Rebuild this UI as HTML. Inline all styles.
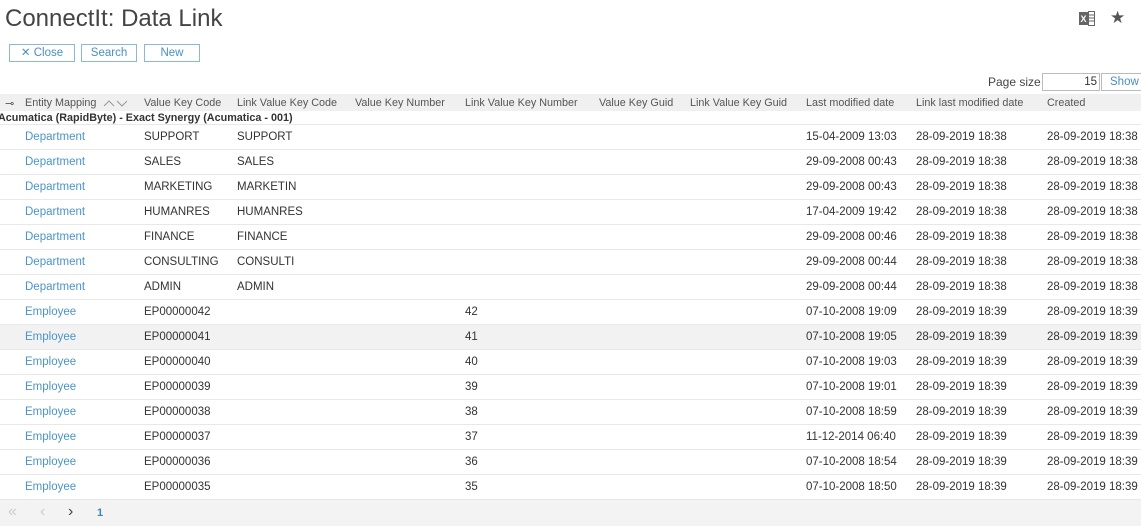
<!DOCTYPE html><html><head><style>
body{margin:0;width:1141px;height:532px;overflow:hidden;background:#fff;font-family:"Liberation Sans",sans-serif;font-size:11.5px;color:#333;position:relative}
.a{position:absolute;white-space:nowrap}
.btn{position:absolute;top:44px;height:16px;border:1px solid #8db8d2;color:#4a90bd;font-size:11.5px;line-height:16px;text-align:center}
.row{position:absolute;left:0;width:1141px;height:24px;border-bottom:1px solid #e8e8e8}
.row span{position:absolute;top:6px;white-space:nowrap}
.l{color:#4a94c8}
.h span{position:absolute;top:3px;color:#555;font-size:10.8px;white-space:nowrap}
</style></head><body>
<div class="a" style="left:5px;top:5px;font-size:24px;color:#444">ConnectIt: Data Link</div>
<svg class="a" style="left:1079px;top:11px" width="17" height="15" viewBox="0 0 17 15"><rect x="0" y="1" width="9" height="13" fill="#666"/><text x="1.5" y="11" font-size="9" fill="#fff" font-family="Liberation Sans" font-weight="bold">X</text><rect x="9.5" y="0.5" width="6" height="14" fill="none" stroke="#666"/><path d="M10 4h5M10 7h5M10 10h5" stroke="#666"/></svg>
<div class="a" style="left:1110px;top:8px;font-size:17px;color:#555">★</div>
<div class="btn" style="left:9px;width:64px">✕ Close</div>
<div class="btn" style="left:81px;width:54px">Search</div>
<div class="btn" style="left:144px;width:54px">New</div>
<div class="a" style="left:988px;top:75px;color:#444;font-size:12px">Page size</div>
<div class="a" style="left:1042px;top:73px;width:54px;height:16px;border:1px solid #bbb;text-align:right;line-height:16px;color:#333;padding-right:2px">15</div>
<div class="a" style="left:1101px;top:73px;width:45px;height:16px;border:1px solid #bbb;color:#4a90bd;line-height:16px;padding-left:8px">Show</div>
<div class="row h" style="top:94px;height:17px;background:#f0f0f0;border:0">
<span style="left:5px">⊸</span><span style="left:25px">Entity Mapping</span><svg style="position:absolute;left:103px;top:5px" width="24" height="8"><path d="M1 7l5-5 5 5M14 2l5 5 5-5" fill="none" stroke="#999"/></svg><span style="left:144px">Value Key Code</span><span style="left:237px">Link Value Key Code</span><span style="left:355px">Value Key Number</span><span style="left:465px">Link Value Key Number</span><span style="left:599px">Value Key Guid</span><span style="left:690px">Link Value Key Guid</span><span style="left:806px">Last modified date</span><span style="left:916px">Link last modified date</span><span style="left:1047px">Created</span></div>
<div class="a" style="left:-2px;top:112px;font-weight:bold;font-size:10.8px;color:#333">Acumatica (RapidByte) - Exact Synergy (Acumatica - 001)</div>
<div id="rows"></div>
<div class="a" style="left:0;top:500px;width:1141px;height:26px;background:#f3f3f3"></div>
<div class="a" style="left:8px;top:503px;font-size:16px;color:#ccc">«</div>
<div class="a" style="left:40px;top:503px;font-size:16px;color:#ccc">‹</div>
<div class="a" style="left:68px;top:503px;font-size:16px;color:#444">›</div>
<div class="a" style="left:97px;top:507px;font-size:11px;font-weight:bold;color:#3a86b4">1</div>
<script>
var d=[["Department","SUPPORT","SUPPORT","","15-04-2009 13:03","28-09-2019 18:38"],["Department","SALES","SALES","","29-09-2008 00:43","28-09-2019 18:38"],["Department","MARKETING","MARKETIN","","29-09-2008 00:43","28-09-2019 18:38"],["Department","HUMANRES","HUMANRES","","17-04-2009 19:42","28-09-2019 18:38"],["Department","FINANCE","FINANCE","","29-09-2008 00:46","28-09-2019 18:38"],["Department","CONSULTING","CONSULTI","","29-09-2008 00:44","28-09-2019 18:38"],["Department","ADMIN","ADMIN","","29-09-2008 00:44","28-09-2019 18:38"],["Employee","EP00000042","","42","07-10-2008 19:09","28-09-2019 18:39"],["Employee","EP00000041","","41","07-10-2008 19:05","28-09-2019 18:39"],["Employee","EP00000040","","40","07-10-2008 19:03","28-09-2019 18:39"],["Employee","EP00000039","","39","07-10-2008 19:01","28-09-2019 18:39"],["Employee","EP00000038","","38","07-10-2008 18:59","28-09-2019 18:39"],["Employee","EP00000037","","37","11-12-2014 06:40","28-09-2019 18:39"],["Employee","EP00000036","","36","07-10-2008 18:54","28-09-2019 18:39"],["Employee","EP00000035","","35","07-10-2008 18:50","28-09-2019 18:39"]];
var h='<div class="row" style="top:100px;height:24px;background:transparent"></div>';d.forEach(function(r,i){h+='<div class="row" style="top:'+(125+i*25)+'px;'+(i==8?'background:#f2f2f2':'')+'"><span class="l" style="left:25px">'+r[0]+'</span><span style="left:144px">'+r[1]+'</span><span style="left:237px">'+r[2]+'</span><span style="left:465px">'+r[3]+'</span><span style="left:806px">'+r[4]+'</span><span style="left:916px">'+r[5]+'</span><span style="left:1047px">'+r[5]+'</span></div>';});
document.getElementById("rows").innerHTML=h;
</script>
</body></html>
